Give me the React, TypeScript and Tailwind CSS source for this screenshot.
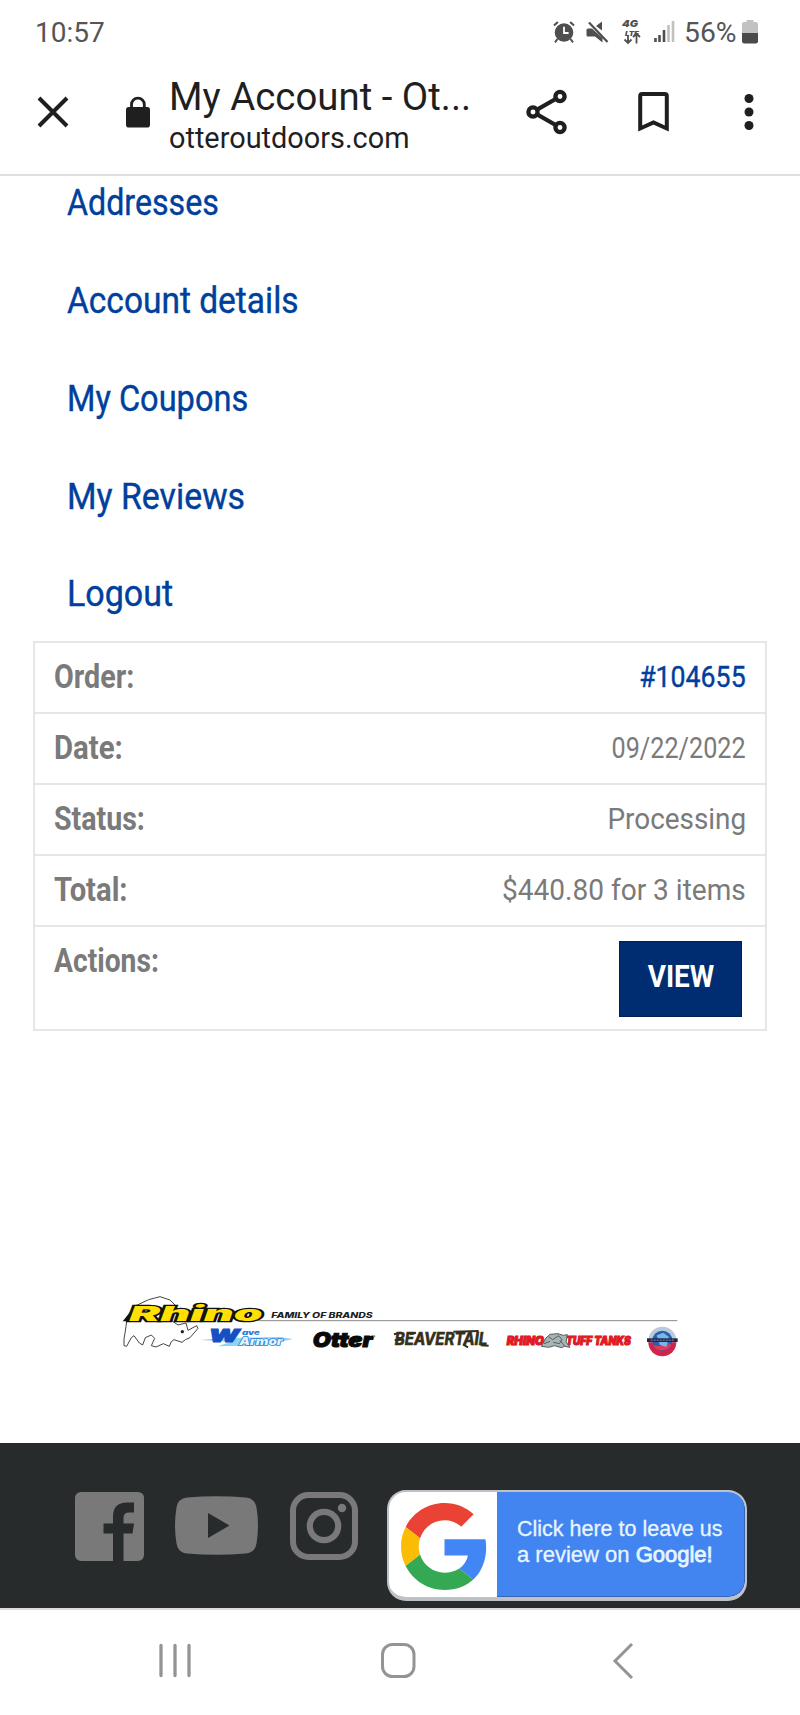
import clsx from "clsx";

const links = [
  { label: "Addresses", fit: "scale-x-[0.87]" },
  { label: "Account details", fit: "scale-x-[0.905]" },
  { label: "My Coupons", fit: "scale-x-[0.88]" },
  { label: "My Reviews", fit: "scale-x-[0.915]" },
  { label: "Logout", fit: "scale-x-[0.92]" },
];

const rows = [
  { label: "Order:", value: "#104655", fit: "scale-x-[0.87]", valueFit: "scale-x-[0.89]", link: true },
  { label: "Date:", value: "09/22/2022", fit: "scale-x-[0.89]", valueFit: "scale-x-[0.84]" },
  { label: "Status:", value: "Processing", fit: "scale-x-[0.865]", valueFit: "scale-x-[0.93]" },
  { label: "Total:", value: "$440.80 for 3 items", fit: "scale-x-[0.885]", valueFit: "scale-x-[0.935]" },
];

const AlarmIcon = () => (
  <svg width="22" height="22" viewBox="0 0 22 22" className="text-[#4f4f4f]" aria-hidden>
    <path d="M1 4.6 4.8 1M21 4.6 17.2 1M4.5 18 2 21.4M17.5 18l2.5 3.4" stroke="currentColor" strokeWidth="2" />
    <circle cx="11" cy="11.5" r="9.3" fill="currentColor" />
    <path d="M11 5.8v6.2h4.6" fill="none" stroke="#fff" strokeWidth="1.8" />
  </svg>
);

const MuteIcon = () => (
  <svg width="23" height="22" viewBox="0 0 23 22" className="text-[#4f4f4f]" aria-hidden>
    <path d="M.5 9Q.5 7.5 2 7.500h4L16.500 17v4.500L9 15.500H2Q.5 15.500.5 14zM16 .5v9L10 5z" fill="currentColor" />
    <path d="m3 1.500 18.500 19.500" stroke="currentColor" strokeWidth="2.200" />
  </svg>
);

const NetworkIcon = () => (
  <svg width="20" height="28" viewBox="0 0 20 28" className="overflow-visible text-[#4f4f4f]" aria-hidden>
    <text x="0" y="9.300" textLength="16" lengthAdjust="spacingAndGlyphs" className="fill-current font-['Inter'] text-[9.500px] font-black italic">4G</text>
    <text x="3" y="17.700" textLength="14" lengthAdjust="spacingAndGlyphs" className="fill-current font-['Inter'] text-[6.500px] font-black italic">LTE</text>
    <path d="M6 17v8M2.500 21.500 6 25l3.500-3.500M14.500 25.500V16M11 19l3.500-3.500L18 19" fill="none" stroke="currentColor" strokeWidth="1.800" />
  </svg>
);

const SignalIcon = () => (
  <svg width="21" height="22" viewBox="0 0 21 22" aria-hidden>
    <path d="M1.500 21v-4M5.500 21v-7M10 21V9" stroke="#4f4f4f" strokeWidth="2.600" />
    <path d="M14.500 21V4M19 21V0" stroke="#c0c0c0" strokeWidth="2.600" />
  </svg>
);

const BatteryIcon = () => (
  <svg width="16" height="24" viewBox="0 0 16 24" aria-hidden>
    <path d="M4.500 0h7v2H14q2 0 2 2v9H0V4q0-2 2-2h2.500z" fill="#c2c2c2" />
    <path d="M0 13h16v8q0 2.500-2.500 2.500h-11Q0 23.500 0 21z" fill="#4a4a4a" />
  </svg>
);

function StatusBar() {
  return (
    <div className="flex h-16 items-center pl-[35px] pr-[42px] text-[28px] leading-none text-[#555]">
      <span className="mt-px">10:57</span>
      <div className="ml-auto flex items-center">
        <AlarmIcon />
        <span className="ml-[11px]"><MuteIcon /></span>
        <span className="ml-[13px]"><NetworkIcon /></span>
        <span className="ml-3"><SignalIcon /></span>
        <span className="ml-[9px] mt-px w-[54px]"><span className="inline-block origin-left scale-x-[1.01]">56%</span></span>
        <span className="ml-1"><BatteryIcon /></span>
      </div>
    </div>
  );
}

function Toolbar() {
  return (
    <div className="flex h-28 items-center border-b-2 border-[#dfdfdf] pr-10 text-[#1f1f1f]">
      <svg width="32" height="32" viewBox="0 0 32 32" className="ml-[37px] -mt-[14px]" aria-hidden>
        <path d="m2 2 28 28M30 2 2 30" stroke="currentColor" strokeWidth="4" />
      </svg>
      <svg width="24" height="32" viewBox="0 0 24 32" className="ml-[57px] -mt-[15px]" aria-hidden>
        <path d="M5.500 12V8.500a6.300 6.300 0 0 1 12.800 0V12" fill="none" stroke="currentColor" strokeWidth="2.800" />
        <rect y="11" width="24" height="20.500" rx="2.800" fill="currentColor" />
      </svg>
      <div className="ml-[19px] -mt-[8px] w-[311px] whitespace-nowrap">
        <div className="w-max origin-left scale-x-[1.01] text-[38px] leading-[44px]">My Account - Ot...</div>
        <div className="mt-[2px] w-max origin-left scale-x-[1.01] text-[28.600px] leading-[35px]">otteroutdoors.com</div>
      </div>
      <svg width="42" height="46" viewBox="0 0 42 46" className="ml-[46px] -mt-[15px]" aria-hidden>
        <g fill="none" stroke="currentColor" strokeWidth="4.300">
          <path d="m34 7.500-27 15.500 27 15.500" />
          <circle cx="34" cy="7.500" r="4.600" fill="#fff" />
          <circle cx="7" cy="23" r="4.600" fill="#fff" />
          <circle cx="34" cy="38.500" r="4.600" fill="#fff" />
        </g>
      </svg>
      <svg width="32" height="40" viewBox="0 0 32 40" className="ml-[70px] -mt-[15px]" aria-hidden>
        <path d="M2.200 36.500V4q0-2 2-2h22.600q2 0 2 2v32.500l-13.300-6z" fill="none" stroke="currentColor" strokeWidth="4" />
      </svg>
      <svg width="10" height="38" viewBox="0 0 10 38" className="ml-[74px] -mt-[15px]" fill="currentColor" aria-hidden>
        <circle cx="5" cy="5.500" r="4.500" />
        <circle cx="5" cy="19" r="4.500" />
        <circle cx="5" cy="32.500" r="4.500" />
      </svg>
    </div>
  );
}

function OrderTable() {
  return (
    <div className="-mt-[2px] ml-[33px] h-[390px] w-[734px] border-2 border-[#e6e6e6] text-[#7a7a7a]">
      {rows.map((r) => (
        <div key={r.label} className="flex h-[71px] items-center justify-between border-b-2 border-[#e6e6e6] pb-px pl-[19px] pr-[19px]">
          <span className={clsx("origin-left text-[33px] font-bold", r.fit)}>{r.label}</span>
          <span className={clsx("origin-right text-[30px]", r.valueFit, r.link && "text-[#003f9c] [-webkit-text-stroke:0.4px]")}>
            {r.value}
          </span>
        </div>
      ))}
      <div className="flex items-start justify-between pl-[19px] pr-[23px] pt-[14px]">
        <span className="-mt-[5px] origin-left scale-x-[0.855] text-[33px] font-bold">Actions:</span>
        <button className="h-[76px] w-[123px] border border-[#002255] bg-[#002d72] pb-[3px] text-[31px] font-bold text-white">
          <span className="inline-block scale-x-[0.9]">VIEW</span>
        </button>
      </div>
    </div>
  );
}

function Brands() {
  return (
    <svg width="580" height="80" viewBox="0 0 1740 240" className="ml-[110px] mt-[254px] shrink-0" role="img" aria-label="Rhino family of brands">
      <path d="M440 107h1262" stroke="#8a8a8a" strokeWidth="3" />
      <g fill="none" stroke="#444" strokeWidth="3">
        <path d="m78 62 38-18 34-9 30 10 20 20" />
        <path d="M50 108q-2 18-4 30-6 26-4 44l8 2 14-26 8-6 16 22 10 6 8-22 18-8 10 10-10 22 14 4 22-10 18 8 6-14 8-6 24 8 10-8 14-6 24-28-4-8-26 14-6-22-24 6-20-14" />
      </g>
      <circle cx="217" cy="140" r="5" fill="#222" />
      <path d="m38 109 40-50 24 4-34 46z" fill="#111" />
      <text x="58" y="107" textLength="400" lengthAdjust="spacingAndGlyphs" stroke="#111" strokeWidth="8" fill="#ffe000" className="font-['Inter'] text-[62px] font-black italic [paint-order:stroke]">Rhino</text>
      <text x="484" y="98" textLength="304" lengthAdjust="spacingAndGlyphs" fill="#222" className="font-['Inter'] text-[22px] font-extrabold italic">FAMILY OF BRANDS</text>

      <path d="m270 165 60-5 180-4 38 6-35 8-100 12-90 2 40-14z" fill="#8ed4f5" />
      <text x="296" y="172" textLength="92" lengthAdjust="spacingAndGlyphs" fill="#164fc4" stroke="#164fc4" strokeWidth="3" className="font-['Inter'] text-[50px] font-black italic">W</text>
      <text x="396" y="151" textLength="54" lengthAdjust="spacingAndGlyphs" fill="#2a7fd4" className="font-['Inter'] text-[18px] font-black italic">ave</text>
      <text x="388" y="181" textLength="130" lengthAdjust="spacingAndGlyphs" fill="#e2f4ff" stroke="#2485d8" strokeWidth="4" className="font-['Inter'] text-[30px] font-black italic [paint-order:stroke]">Armor</text>

      <text x="608" y="185" textLength="180" lengthAdjust="spacingAndGlyphs" fill="#090909" stroke="#090909" strokeWidth="3" className="font-['Inter'] text-[61px] font-black italic">Otter</text>
      <circle cx="793" cy="154" r="3" fill="#888" />

      <text x="854" y="181" textLength="278" lengthAdjust="spacingAndGlyphs" fill="#35301c" stroke="#35301c" strokeWidth="2" className="font-['Inter'] text-[50px] font-bold italic">BEAVERTAIL</text>
      <path d="m854 166 22-2M1030 140l76-2M1060 179l14 8M900 148l18-5M1112 181l24 1M852 148l20-5" stroke="#35301c" strokeWidth="6" />

      <g fill="#ec1620" stroke="#b5151a" strokeWidth="3" className="font-['Inter'] text-[34px] font-black italic [paint-order:stroke]">
        <text x="1190" y="179" textLength="112" lengthAdjust="spacingAndGlyphs">RHINO</text>
        <text x="1368" y="179" textLength="194" lengthAdjust="spacingAndGlyphs">TUFF TANKS</text>
      </g>
      <path d="m1294 184 14-25 12-11 24-2 16 5 12-2-4 22 12 16-16-3-10 4-20-6-18 5z" fill="#a9b5b5" stroke="#536060" strokeWidth="3" />
      <path d="m1316 155 12 9 18-12 10 12-8 12-18-4M1350 166l14 17M1302 176l18-7" fill="none" stroke="#536060" strokeWidth="3" />

      <circle cx="1657" cy="167" r="42" fill="#b9cadd" />
      <path d="M1615 172a42 42 0 0 0 84 0z" fill="#d1244c" />
      <circle cx="1657" cy="167" r="30" fill="#285fae" />
      <path d="M1630 180q22 8 28-4t26 4q-8 16-28 16t-26-16z" fill="#e23c5c" />
      <path d="m1640 151 20-8 17 13-8 30-20-7z" fill="#75b9e6" />
      <rect x="1611" y="160" width="92" height="11" fill="#1f2548" />
      <path d="M1622 165.500h70" stroke="#8390b5" strokeWidth="3" strokeDasharray="6 3" />
    </svg>
  );
}

const GoogleLogo = () => (
  <svg width="87" height="87" viewBox="0 0 48 48" aria-hidden>
    <path fill="#ea4335" d="M24 9.500c3.540 0 6.710 1.220 9.210 3.600l6.850-6.850C35.900 2.380 30.470 0 24 0 14.620 0 6.510 5.380 2.560 13.220l7.980 6.190C12.430 13.720 17.740 9.500 24 9.500z" />
    <path fill="#4285f4" d="M46.980 24.550c0-1.570-.15-3.090-.38-4.550H24v9.020h12.940c-.58 2.960-2.260 5.480-4.780 7.180l7.730 6c4.510-4.180 7.090-10.360 7.090-17.650z" />
    <path fill="#fbbc05" d="M10.530 28.590c-.48-1.450-.76-2.990-.76-4.590s.27-3.140.76-4.590l-7.980-6.190C.92 16.460 0 20.120 0 24c0 3.880.92 7.540 2.560 10.780l7.970-6.190z" />
    <path fill="#34a853" d="M24 48c6.480 0 11.930-2.130 15.890-5.810l-7.730-6c-2.150 1.450-4.920 2.300-8.160 2.300-6.260 0-11.570-4.220-13.470-9.910l-7.980 6.190C6.510 42.620 14.620 48 24 48z" />
  </svg>
);

function Footer() {
  return (
    <footer className="mt-[78px] flex h-[165px] items-start bg-[#272b2b] pl-[75px] text-[#797979]">
      <svg width="69" height="69" viewBox="0 0 69 69" className="mt-[49px]" fill="currentColor" aria-hidden>
        <path d="M6.500 0h56Q69 0 69 6.500v56Q69 69 62.500 69H48.500V41.500H57.500L59 31.500H48.500V26q0-5.500 5.500-5.500h5V10.500H52q-14 0-14 14v7H28.500v10H38V69H6.500Q0 69 0 62.500v-56Q0 0 6.500 0z" />
      </svg>
      <svg width="83" height="59" viewBox="0 0 83 59" className="ml-[31px] mt-[53px]" fill="currentColor" aria-hidden>
        <path fillRule="evenodd" d="M12 1.500q29.500-2.500 59 0 9 1 10.500 10 3 18 0 36-1.500 9-10.500 10-29.500 2.500-59 0-9-1-10.500-10-3-18 0-36 1.500-9 10.500-10zM33 17v25l21.500-12.500z" />
      </svg>
      <svg width="68" height="68" viewBox="0 0 68 68" className="ml-[32px] mt-[49px]" aria-hidden>
        <rect x="3" y="3" width="62" height="62" rx="15.500" fill="none" stroke="currentColor" strokeWidth="6" />
        <circle cx="34" cy="34" r="14.200" fill="none" stroke="currentColor" strokeWidth="6.200" />
        <circle cx="52" cy="16" r="4.200" fill="currentColor" />
      </svg>
      <div className="ml-[29px] mt-[47px] flex h-[111px] w-[360px] overflow-hidden rounded-[19px] border-2 border-b-4 border-[#bfc1c7] bg-white">
        <div className="flex w-[108px] items-center pl-[12px] pt-[4px]">
          <GoogleLogo />
        </div>
        <div className="flex-1 whitespace-nowrap rounded-r-[16px] border-b border-r border-[#3564b8] bg-[#4285f0] pl-[20px] pt-[24px] font-['Liberation_Sans'] text-[22px] leading-[26px] text-[#e8f5ff] [-webkit-text-stroke:0.3px]">
          <div className="w-max origin-left scale-x-[0.977]">Click here to leave us</div>
          <div className="w-max origin-left">
            a review on <span className="[-webkit-text-stroke:0.8px]">Google!</span>
          </div>
        </div>
      </div>
    </footer>
  );
}

function SystemNav() {
  return (
    <div className="flex h-[107px] items-start border-t-2 border-[#dcdcdc] pl-[158px] pt-[33px] text-[#949494]">
      <svg width="34" height="36" viewBox="0 0 34 36" fill="none" stroke="currentColor" strokeWidth="3.300" strokeLinecap="round" aria-hidden>
        <path d="M3 2.500v30M17 2.500v30M31 2.500v30" />
      </svg>
      <svg width="36" height="36" viewBox="0 0 36 36" className="ml-[188px]" fill="none" stroke="currentColor" strokeWidth="3" aria-hidden>
        <rect x="2.500" y="1.500" width="31.500" height="32" rx="10" />
      </svg>
      <svg width="22" height="36" viewBox="0 0 22 36" className="ml-[196px]" fill="none" stroke="currentColor" strokeWidth="3" aria-hidden>
        <path d="M20 1 3 18l17 17" />
      </svg>
    </div>
  );
}

export default function App() {
  return (
    <div className="flex h-[1715px] w-[800px] flex-col overflow-hidden bg-white font-['Roboto',sans-serif]">
      <StatusBar />
      <Toolbar />
      <nav className="-mt-[22px] flex flex-col pl-[67px] text-[37px] text-[#003f9c] [-webkit-text-stroke:0.4px]">
        {links.map((l) => (
          <a key={l.label} href="#" className="flex h-[97.8px] items-center">
            <span className={clsx("origin-left whitespace-nowrap", l.fit)}>{l.label}</span>
          </a>
        ))}
      </nav>
      <OrderTable />
      <Brands />
      <Footer />
      <SystemNav />
    </div>
  );
}
